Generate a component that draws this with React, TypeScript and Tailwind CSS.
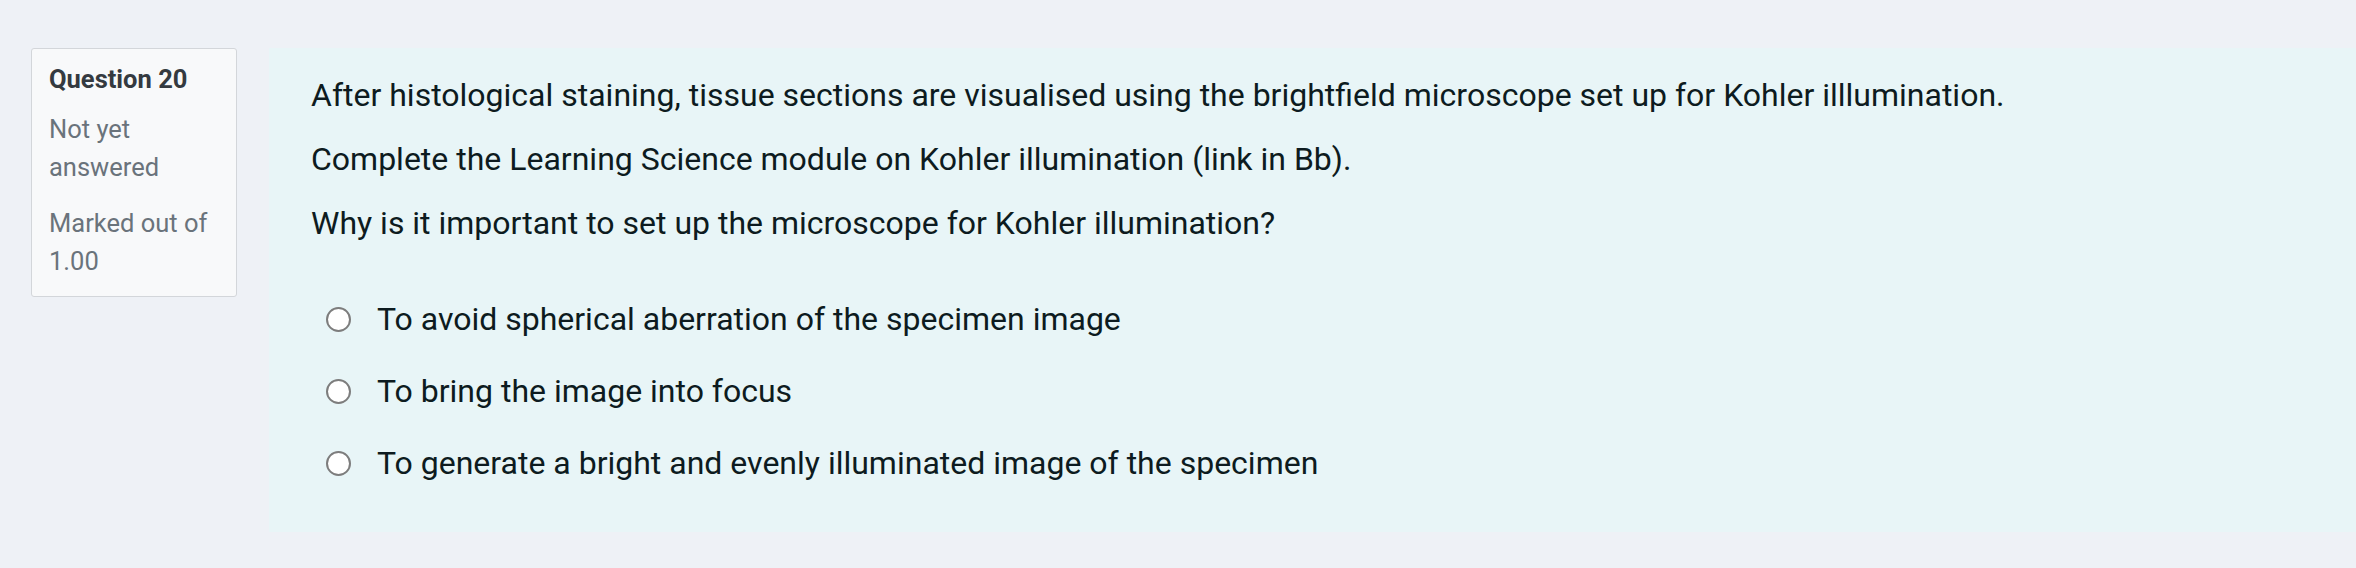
export default function App() {
  const options = [
    "To avoid spherical aberration of the specimen image",
    "To bring the image into focus",
    "To generate a bright and evenly illuminated image of the specimen",
  ];

  return (
    <div
      className="min-h-screen w-full bg-[#eef1f6] pt-[48px] pl-[31px]"
      style={{ fontFamily: "Roboto, 'Noto Sans', sans-serif" }}
    >
      <div className="flex items-start gap-[32px]">
        {/* question info box */}
        <div className="w-[206px] shrink-0 rounded-[3px] border border-[#d3d6da] bg-[#f8f9fa] px-[17px] pt-[12px] pb-[16px]">
          <h3 className="text-[25.5px] leading-[36px] font-bold text-[#343a40]">
            Question <span className="font-bold">20</span>
          </h3>
          <div className="mt-[13px] text-[25.5px] leading-[38px] text-[#6a737b]">Not yet answered</div>
          <div className="mt-[18px] text-[25.5px] leading-[38px] text-[#6a737b]">Marked out of 1.00</div>
        </div>

        {/* formulation */}
        <div className="flex-1 bg-[#e8f5f7] pl-[42px] pt-[25px] pb-[46px] text-[32px] leading-[45px] text-[#0d1b20]">
          <p className="mb-[19px]">
            After histological staining, tissue sections are visualised using the brightfield microscope set up for
            Kohler illlumination.
          </p>
          <p className="mb-[19px]">Complete the Learning Science module on Kohler illumination (link in Bb).</p>
          <p>Why is it important to set up the microscope for Kohler illumination?</p>

          <div className="mt-[51px] flex flex-col gap-[27px]">
            {options.map((o) => (
              <label key={o} className="flex items-center">
                <span className="ml-[15px] mr-[26px] h-[25px] w-[25px] shrink-0 rounded-full border-2 border-[#7d7d7d] bg-white" />
                <span>{o}</span>
              </label>
            ))}
          </div>
        </div>
      </div>
    </div>
  );
}
